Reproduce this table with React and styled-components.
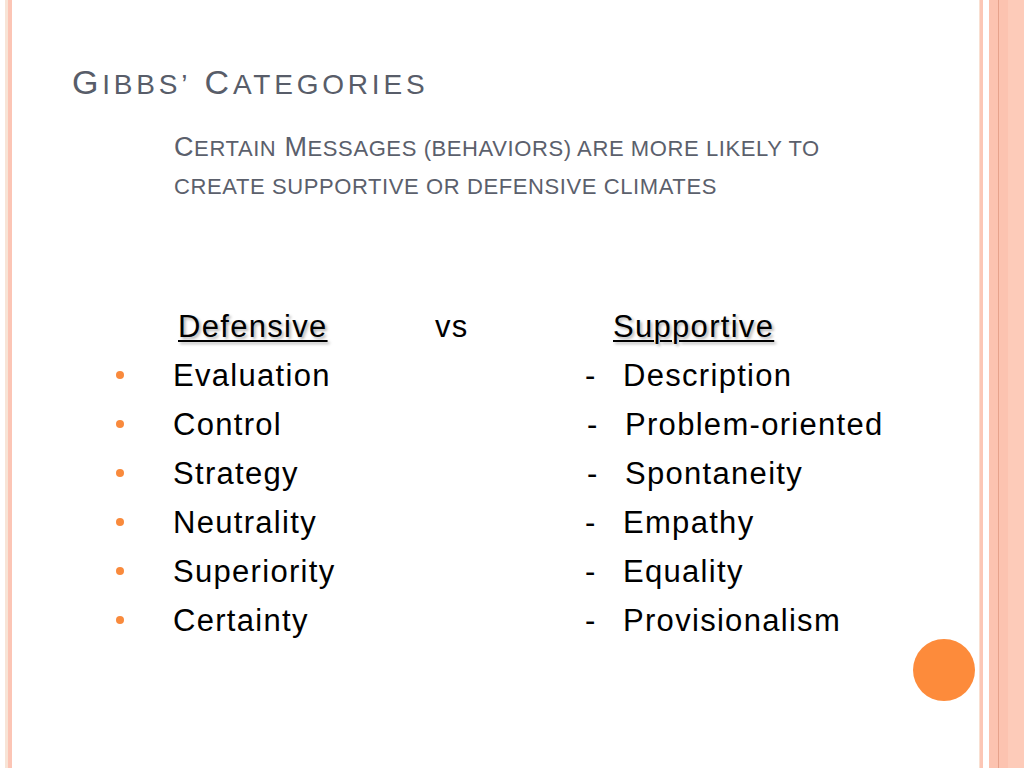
import React from "react";
import styled, { createGlobalStyle } from "styled-components";

const GlobalStyle = createGlobalStyle`
  html, body {
    margin: 0;
    padding: 0;
    background: #ffffff;
    width: 1024px;
    height: 768px;
    overflow: hidden;
  }
`;

const Slide = styled.div`
  position: relative;
  width: 1024px;
  height: 768px;
  display: flex;
  background: #ffffff;
  font-family: "Liberation Sans", Arial, sans-serif;
`;

const LeftRail = styled.div`
  width: 12px;
  flex-shrink: 0;
  background: linear-gradient(
    to right,
    #ffffff 0 5px,
    #f8e4d6 5px 8px,
    #fcc5b5 8px 12px
  );
`;

const RightRail = styled.div`
  width: 45px;
  flex-shrink: 0;
  margin-left: auto;
  background: linear-gradient(
    to right,
    #f9e0d2 0 1px,
    #fcc6b5 1px 4px,
    #ffffff 4px 10px,
    #fcc3b0 10px 19px,
    #e6a28b 19px 20px,
    #fcc3b0 20px 29px,
    #fdcbb9 29px 45px
  );
`;

const Content = styled.div`
  flex: 1;
  padding: 62px 0 0 60px;
`;

const Title = styled.h1`
  margin: 0;
  font-weight: normal;
  font-size: 34px;
  line-height: 40px;
  letter-spacing: 3.8px;
  color: #585d69;
  text-transform: uppercase;
  white-space: nowrap;
`;

const Small = styled.span`
  font-size: ${({ $size }) => $size}px;
`;

const Subtitle = styled.p`
  margin: 24px 0 0 102px;
  font-size: 27px;
  line-height: 37px;
  letter-spacing: 0.6px;
  color: #5b606c;
  text-transform: uppercase;
  white-space: nowrap;
`;

const Body = styled.div`
  margin: 97px 0 0 28px;
  font-size: 31px;
  line-height: 49px;
  letter-spacing: 1.3px;
  color: #000000;
`;

const HeaderRow = styled.div`
  display: grid;
  grid-template-columns: 73px 262px 178px 1fr;
  white-space: nowrap;
`;

const Heading = styled.span`
  text-decoration: underline;
  text-decoration-thickness: 2px;
  text-underline-offset: 3px;
  text-shadow: 2px 2px 3px rgba(0, 0, 0, 0.3);
  padding-left: ${({ $pad }) => $pad || 0}px;
`;

const Row = styled.div`
  display: grid;
  grid-template-columns: 73px 410px 40px 1fr;
  align-items: center;
  white-space: nowrap;
`;

const Bullet = styled.span`
  display: block;
  width: 8px;
  height: 8px;
  margin: -2px 0 0 16px;
  border-radius: 50%;
  background: #f98a3c;
`;

const Dash = styled.span`
  padding-left: ${({ $nudge }) => 2 + $nudge}px;
`;

const Item = styled.span`
  padding-left: ${({ $nudge }) => $nudge}px;
`;

const Dot = styled.div`
  position: absolute;
  left: 913px;
  top: 639px;
  width: 62px;
  height: 62px;
  border-radius: 50%;
  background: #fd8b3b;
`;

const rows = [
  ["Evaluation", "Description", 0],
  ["Control", "Problem-oriented", 2],
  ["Strategy", "Spontaneity", 2],
  ["Neutrality", "Empathy", 0],
  ["Superiority", "Equality", 0],
  ["Certainty", "Provisionalism", 0],
];

const App = () => {
  return (
    <>
      <GlobalStyle />
      <Slide>
        <LeftRail />
        <Content>
          <Title>
            G<Small $size={28}>ibbs’</Small> C<Small $size={28}>ategories</Small>
          </Title>
          <Subtitle>
            C<Small $size={22}>ertain</Small> M
            <Small $size={22}>essages (behaviors) are more likely to</Small>
            <br />
            <Small $size={22}>create supportive or defensive climates</Small>
          </Subtitle>
          <Body>
            <HeaderRow>
              <span />
              <Heading $pad={5}>Defensive</Heading>
              <span>vs</span>
              <Heading>Supportive</Heading>
            </HeaderRow>
            {rows.map(([left, right, nudge]) => (
              <Row key={left}>
                <Bullet />
                <span>{left}</span>
                <Dash $nudge={nudge}>-</Dash>
                <Item $nudge={nudge}>{right}</Item>
              </Row>
            ))}
          </Body>
        </Content>
        <RightRail />
        <Dot />
      </Slide>
    </>
  );
};

export default App;
